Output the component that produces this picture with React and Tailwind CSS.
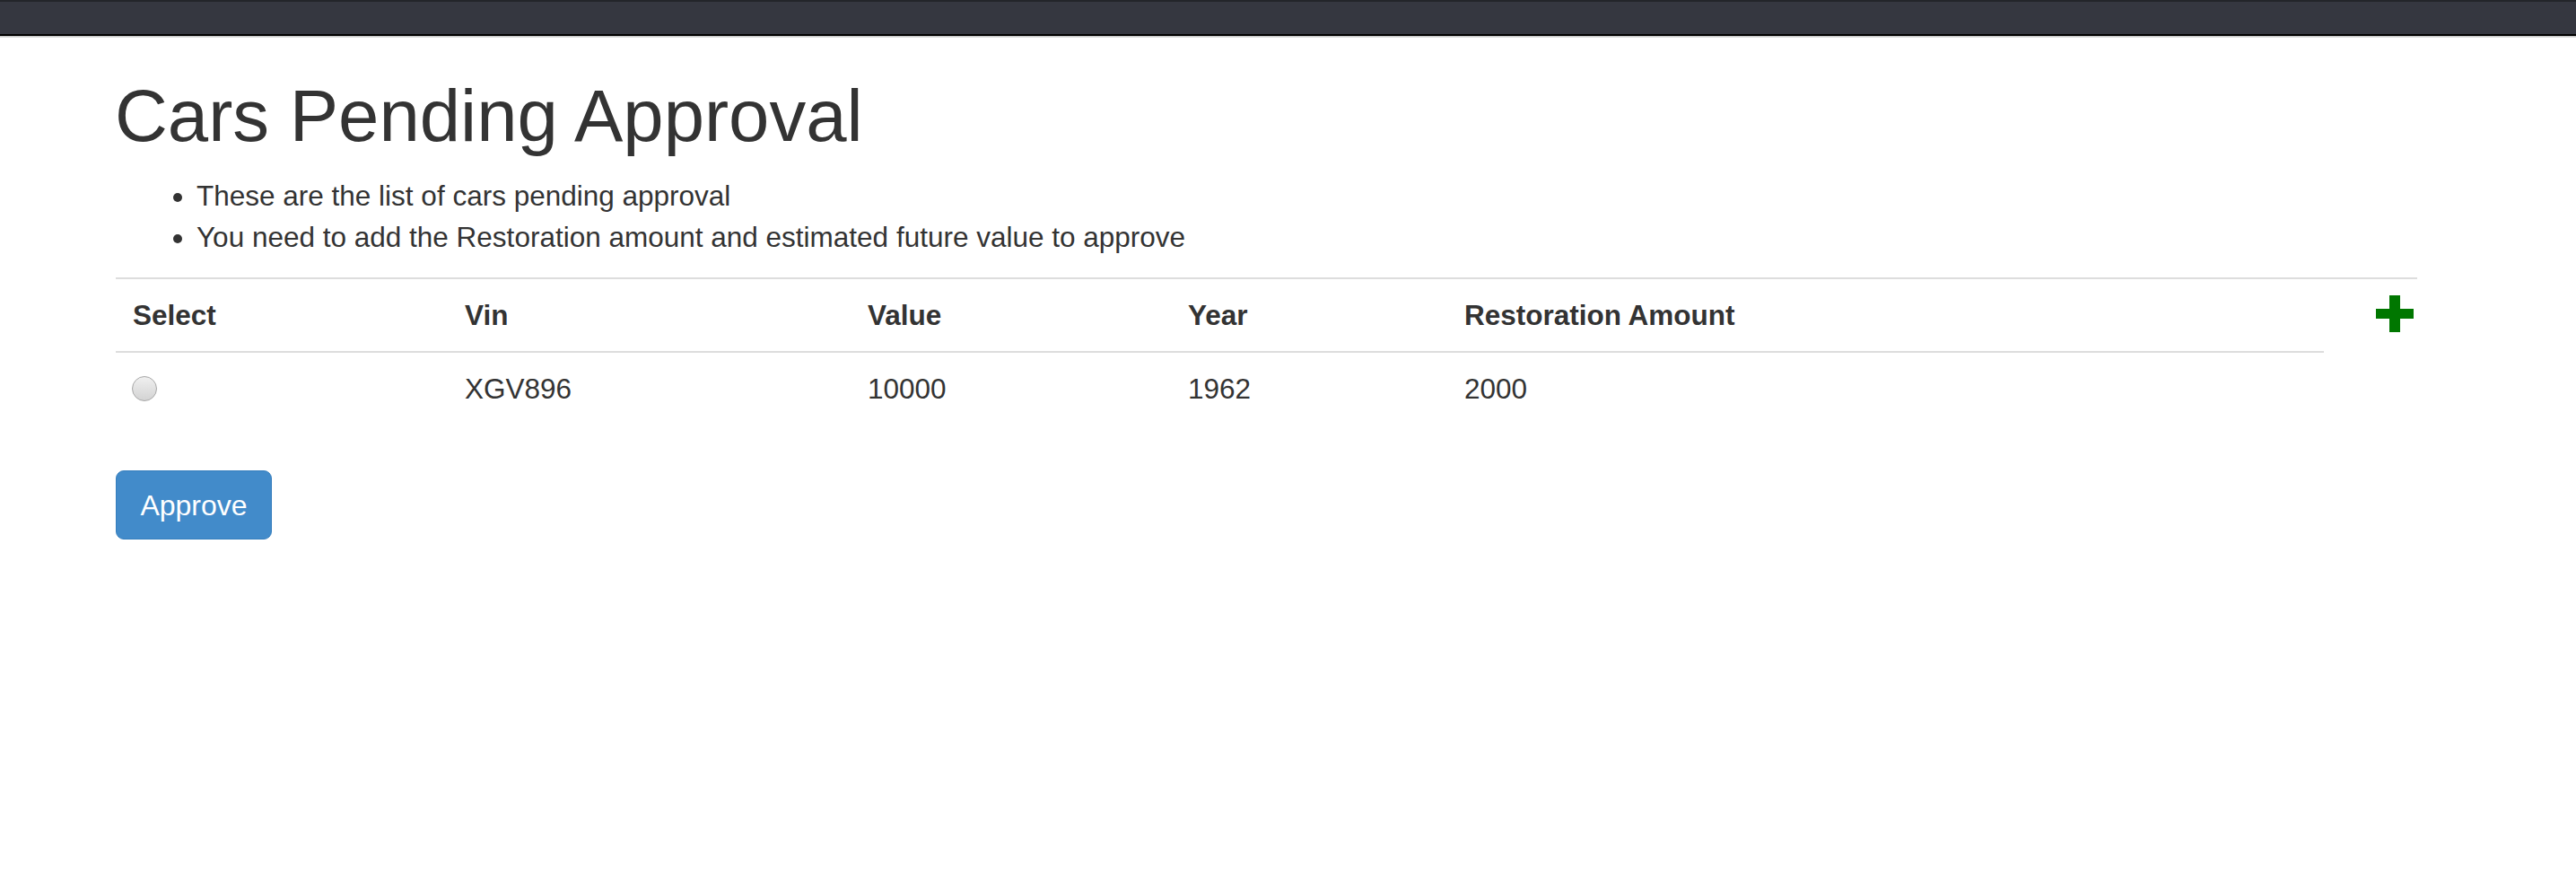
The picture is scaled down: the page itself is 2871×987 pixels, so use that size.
import React from "react";

const cars = [{ vin: "XGV896", value: 10000, year: 1962, restoration: 2000 }];

const PlusIcon = () => (
  <svg width="42" height="41" viewBox="0 0 42 41" className="block">
    <rect x="15" y="0" width="12" height="41" fill="#007700" />
    <rect x="0" y="15" width="42" height="11" fill="#007700" />
  </svg>
);

export default function App() {
  return (
    <div className="min-h-screen bg-white text-[#333333] font-['Liberation_Sans',Arial,sans-serif]">
      {/* top nav strip */}
      <div className="h-[2px] bg-[#23252a]" />
      <div className="h-[36px] bg-[#353740]" />
      <div className="h-[2px] bg-black" />
      <div className="h-[2px] bg-gradient-to-b from-[#bdbdbd] to-[#e9e9e9]" />

      <div className="pl-[129px]">
        <h1 className="mt-[42px] text-[81.5px] leading-[90px] font-normal -ml-[1px]">Cars Pending Approval</h1>

        <ul className="mt-[21px] pl-[90px] list-disc text-[31.5px] leading-[46px]">
          <li>These are the list of cars pending approval</li>
          <li>You need to add the Restoration amount and estimated future value to approve</li>
        </ul>

        <div className="mt-[22px] w-[2565px] border-t-2 border-[#dddddd] flex items-start">
          <table className="w-[2461px] border-collapse text-[31.5px] leading-[44px] table-fixed">
            <colgroup>
              <col className="w-[370px]" />
              <col className="w-[449px]" />
              <col className="w-[357px]" />
              <col className="w-[308px]" />
              <col />
            </colgroup>
            <thead>
              <tr className="border-b-2 border-[#dddddd]">
                <th className="text-left font-bold px-[19px] py-[18px]">Select</th>
                <th className="text-left font-bold px-[19px] py-[18px]">Vin</th>
                <th className="text-left font-bold px-[19px] py-[18px]">Value</th>
                <th className="text-left font-bold px-[19px] py-[18px]">Year</th>
                <th className="text-left font-bold px-[19px] py-[18px]">Restoration Amount</th>
              </tr>
            </thead>
            <tbody>
              {cars.map((car) => (
                <tr key={car.vin}>
                  <td className="px-[18px] py-[18px] align-middle">
                    <input
                      type="radio"
                      name="car"
                      className="appearance-none block w-[28px] h-[28px] rounded-full border border-[#a9a9a9] bg-gradient-to-b from-[#f0f0f0] to-[#d3d3d3]"
                    />
                  </td>
                  <td className="px-[19px] py-[18px]">{car.vin}</td>
                  <td className="px-[19px] py-[18px]">{car.value}</td>
                  <td className="px-[19px] py-[18px]">{car.year}</td>
                  <td className="px-[19px] py-[18px]">{car.restoration}</td>
                </tr>
              ))}
            </tbody>
          </table>
          <div className="ml-[58px] mt-[18px]">
            <PlusIcon />
          </div>
        </div>

        <button className="mt-[51px] h-[77px] w-[174px] rounded-[9px] bg-[#428bca] border border-[#357ebd] text-white text-[32px] leading-[44px]">
          Approve
        </button>
      </div>
    </div>
  );
}
